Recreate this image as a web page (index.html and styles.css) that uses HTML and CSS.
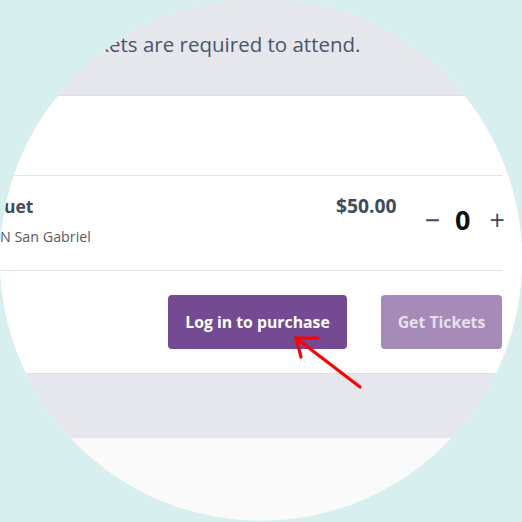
FILE: index.html
```html
<!DOCTYPE html>
<html lang="en">
<head>
<meta charset="utf-8">
<title>Tickets</title>
<link rel="stylesheet" href="styles.css">
</head>
<body>
<div class="lens">
  <div class="notice">Tickets are required to attend.</div>
  <div class="card">
    <div class="table">
      <div class="ticket-row">
        <div class="ticket-info">
          <div class="ticket-name">Banquet</div>
          <div class="ticket-venue">HILTON San Gabriel</div>
        </div>
        <div class="ticket-price">$50.00</div>
        <div class="qty">
          <span class="qty-btn">&minus;</span>
          <span class="qty-val">0</span>
          <span class="qty-btn qty-plus">+</span>
        </div>
      </div>
      <div class="actions">
        <button class="btn btn-primary">Log in to purchase</button>
        <button class="btn btn-disabled">Get Tickets</button>
      </div>
    </div>
  </div>
  <div class="band"></div>
  <div class="foot"></div>
  <svg class="arrow" width="522" height="522" viewBox="0 0 522 522">
    <g stroke="#ff0000" stroke-width="3.2" stroke-linecap="round" fill="none">
      <line x1="360" y1="387" x2="296" y2="338"/>
      <line x1="296" y1="338" x2="318" y2="338"/>
      <line x1="296" y1="338" x2="301" y2="357"/>
    </g>
  </svg>
</div>
</body>
</html>
```

FILE: styles.css
```css
html, body {
  margin: 0;
  padding: 0;
}
body {
  background: #d8efef;
  width: 522px;
  height: 522px;
  overflow: hidden;
  font-family: "Open Sans", "Noto Sans", sans-serif;
}
.lens {
  position: relative;
  width: 522px;
  height: 522px;
  overflow: hidden;
  background: #fafafa;
  clip-path: circle(261px at 261px 259.5px);
}
.notice {
  height: 96px;
  box-sizing: border-box;
  background: #e6e7ec;
  border-bottom: 1px solid #dfe0e4;
  padding: 30px 0 0 72px;
  font-size: 20.5px;
  line-height: 28px;
  color: #4b5567;
  white-space: nowrap;
}
.card {
  background: #ffffff;
  height: 278px;
  border-bottom: 1px solid #dedfe3;
  padding-top: 79px;
  box-sizing: border-box;
}
.table {
  margin: 0 20px 0 -41px;
}
.ticket-row {
  display: flex;
  align-items: flex-start;
  height: 96px;
  box-sizing: border-box;
  border-top: 1px solid #e4e4e4;
  border-bottom: 1px solid #e4e4e4;
  padding-top: 18px;
}
.ticket-info {
  flex: 1;
}
.ticket-name {
  font-weight: 700;
  font-size: 17.5px;
  line-height: 24px;
  color: #3f4b5e;
}
.ticket-venue {
  font-size: 14.3px;
  line-height: 20px;
  margin-top: 9px;
  color: #555b63;
  white-space: nowrap;
}
.ticket-price {
  font-weight: 700;
  font-size: 19.3px;
  line-height: 24px;
  color: #3f4b5e;
  margin-right: 28px;
}
.qty {
  display: flex;
  align-items: center;
  margin-top: 11px;
  margin-right: -3px;
  height: 30px;
}
.qty-btn {
  font-size: 27px;
  line-height: 30px;
  color: #3f4b5e;
}
.qty-val {
  font-size: 27px;
  font-weight: 700;
  line-height: 30px;
  color: #111;
  margin-left: 15px;
}
.qty-plus {
  margin-left: 19px;
}
.actions {
  display: flex;
  justify-content: flex-end;
  gap: 34px;
  padding-top: 24px;
}
.btn {
  height: 54px;
  border: none;
  border-radius: 4px;
  font-family: inherit;
  font-weight: 700;
  font-size: 15.8px;
  padding: 0;
  white-space: nowrap;
}
.btn-primary {
  background: #744b93;
  color: #ffffff;
  width: 179px;
}
.btn-disabled {
  background: #a68bb8;
  color: #e6e0ec;
  width: 121px;
}
.band {
  height: 64px;
  background: #e6e7ec;
}
.foot {
  height: 100px;
  background: #fafafa;
}
.arrow {
  position: absolute;
  left: 0;
  top: 0;
  pointer-events: none;
}
```
